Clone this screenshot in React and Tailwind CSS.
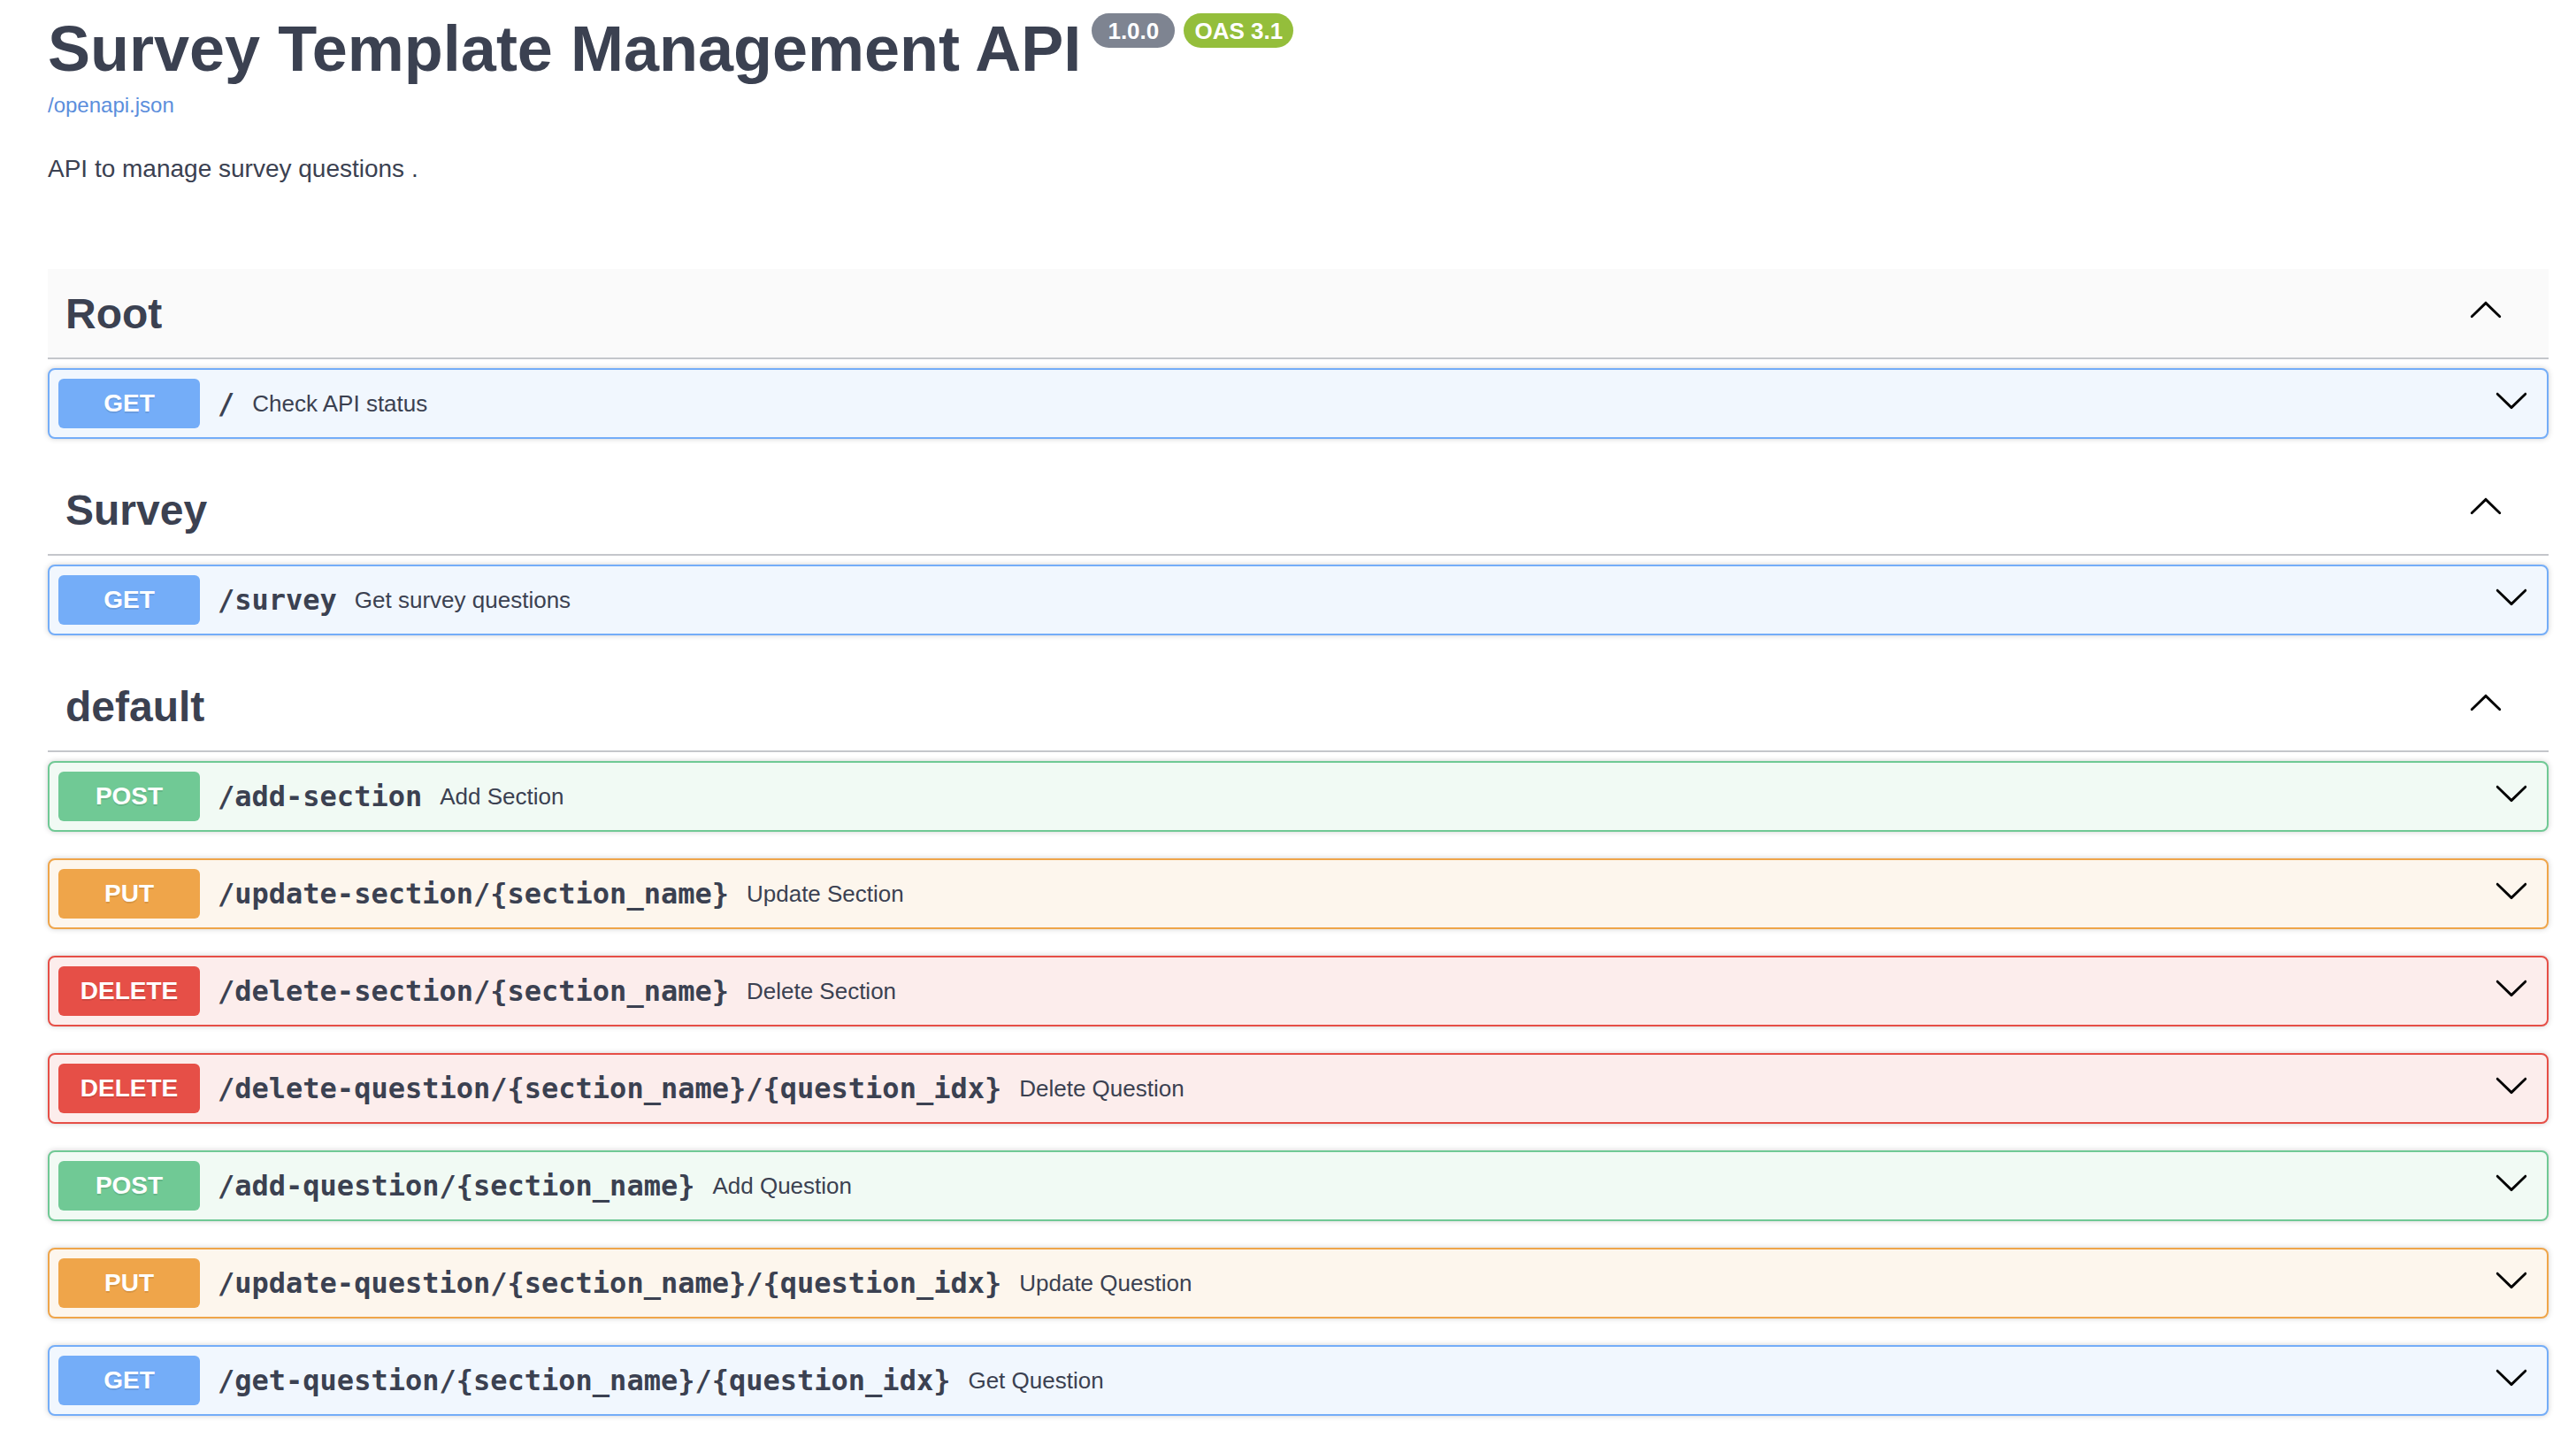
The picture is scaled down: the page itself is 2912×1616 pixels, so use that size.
import React from 'react';

const METHOD = {
  GET: { badge: 'bg-[#74adf8]', box: 'border-[#74adf8] bg-[#f1f7fe]' },
  POST: { badge: 'bg-[#70c995]', box: 'border-[#70c995] bg-[#f1faf4]' },
  PUT: { badge: 'bg-[#efa54a]', box: 'border-[#efa54a] bg-[#fdf6ed]' },
  DELETE: { badge: 'bg-[#e64f47]', box: 'border-[#e64f47] bg-[#fcedec]' },
};

const SECTIONS = [
  {
    name: 'Root',
    hovered: true,
    ops: [{ m: 'GET', path: '/', desc: 'Check API status' }],
  },
  {
    name: 'Survey',
    ops: [{ m: 'GET', path: '/survey', desc: 'Get survey questions' }],
  },
  {
    name: 'default',
    ops: [
      { m: 'POST', path: '/add-section', desc: 'Add Section' },
      { m: 'PUT', path: '/update-section/{section_name}', desc: 'Update Section' },
      { m: 'DELETE', path: '/delete-section/{section_name}', desc: 'Delete Section' },
      { m: 'DELETE', path: '/delete-question/{section_name}/{question_idx}', desc: 'Delete Question' },
      { m: 'POST', path: '/add-question/{section_name}', desc: 'Add Question' },
      { m: 'PUT', path: '/update-question/{section_name}/{question_idx}', desc: 'Update Question' },
      { m: 'GET', path: '/get-question/{section_name}/{question_idx}', desc: 'Get Question' },
    ],
  },
];

function Arrow({ up, className }) {
  return (
    <svg
      viewBox="0 0 20 20"
      width="40"
      height="40"
      className={className}
      style={up ? { transform: 'scaleY(-1)' } : undefined}
    >
      <path
        fill="#000"
        d="M17.418 6.109c.272-.268.709-.268.979 0s.271.701 0 .969l-7.908 7.83c-.27.268-.707.268-.979 0l-7.908-7.83c-.27-.268-.27-.701 0-.969.271-.268.709-.268.979 0L10 13.25l7.418-7.141z"
      />
    </svg>
  );
}

function Op({ op }) {
  const c = METHOD[op.m];
  return (
    <div
      className={`mb-[30px] flex h-[80px] items-center rounded-[8px] border-2 p-[10px] shadow-[0_0_6px_rgba(0,0,0,0.19)] ${c.box}`}
    >
      <div
        className={`flex h-[56px] w-[160px] shrink-0 items-center justify-center rounded-[6px] text-[28px] font-bold leading-[32px] text-white [text-shadow:0_2px_0_rgba(0,0,0,0.1)] ${c.badge}`}
      >
        {op.m}
      </div>
      <span className="px-[20px] font-['DejaVu_Sans_Mono',monospace] text-[32px] font-bold leading-[37px] text-[#3b4151]">
        {op.path}
      </span>
      <span className="flex-1 text-[26px] leading-[30px] text-[#3b4151]">{op.desc}</span>
      <Arrow className="mb-[8px] mr-[10px] shrink-0" />
    </div>
  );
}

export default function App() {
  return (
    <div className="min-h-screen bg-white pl-[54px] pr-[31px] pt-[14px] font-['Liberation_Sans',Arial,Helvetica,sans-serif] text-[#3b4151]">
      <div className="flex items-start">
        <h2 className="text-[72px] font-bold leading-[83px] text-[#3b4151]">
          Survey Template Management API
        </h2>
        <div className="ml-[12px] mt-[1px] flex gap-[10px]">
          <span className="flex h-[39px] w-[94px] items-center justify-center rounded-full bg-[#7e8491] text-[26px] font-bold leading-none text-white">
            1.0.0
          </span>
          <span className="flex h-[39px] w-[124px] items-center justify-center rounded-full bg-[#94be3b] text-[26px] font-bold leading-none text-white">
            OAS 3.1
          </span>
        </div>
      </div>
      <div className="mt-[8px] text-[24px] leading-[28px] text-[#5b8edc]">/openapi.json</div>
      <p className="mt-[42px] text-[28px] leading-[32px] text-[#3b4151]">API to manage survey questions .</p>

      <div className="mt-[97px]">
        {SECTIONS.map((s) => (
          <div key={s.name}>
            <div
              className={`mb-[10px] flex h-[102px] items-center border-b-2 border-[#c4c6cb] pl-[20px] pr-[51px] ${
                s.hovered ? 'bg-[#fafafa]' : 'bg-white'
              }`}
            >
              <h3 className="flex-1 text-[48px] font-bold leading-[55px] text-[#3b4151]">{s.name}</h3>
              <Arrow up className="mb-[6px] shrink-0" />
            </div>
            {s.ops.map((op, i) => (
              <Op key={i} op={op} />
            ))}
          </div>
        ))}
      </div>
    </div>
  );
}
